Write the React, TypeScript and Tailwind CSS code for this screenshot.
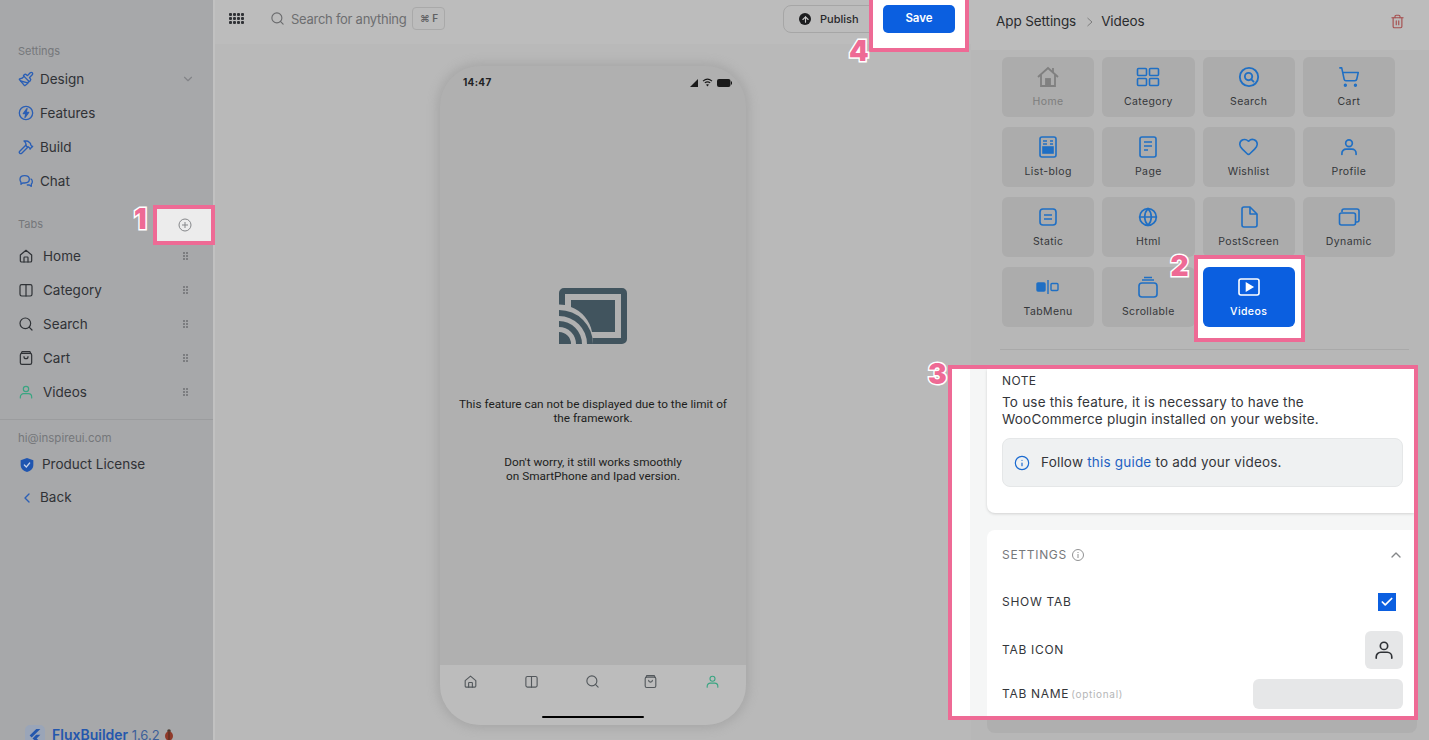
import React from "react";
import { ChevronDown, ChevronUp, ChevronLeft, Hammer, Search, Paintbrush, ShoppingCart, Heart, Globe, Trash2, Info, Check, ArrowUp } from "lucide-react";

const Svg = ({ s = 16, c = "currentColor", w = 1.6, children }: { s?: number; c?: string; w?: number; children: React.ReactNode }) => (
  <svg width={s} height={s} viewBox="0 0 24 24" fill="none" stroke={c} strokeWidth={w} strokeLinecap="round" strokeLinejoin="round" className="shrink-0">{children}</svg>
);

const HomeO = ({ s = 16, c = "#2f3236" }: { s?: number; c?: string }) => (
  <Svg s={s} c={c} w={1.8}><path d="M3.5 10.5 12 3.5l8.5 7V19a2 2 0 0 1-2 2h-13a2 2 0 0 1-2-2z" /><path d="M9 21v-6.5a1 1 0 0 1 1-1h4a1 1 0 0 1 1 1V21" /></Svg>
);
const Book = ({ s = 16, c = "#2f3236" }: { s?: number; c?: string }) => (
  <Svg s={s} c={c} w={1.8}><rect x="3" y="4" width="18" height="17" rx="2.5" /><path d="M12 4v17" /></Svg>
);
const Bag = ({ s = 16, c = "#2f3236" }: { s?: number; c?: string }) => (
  <Svg s={s} c={c} w={1.8}><rect x="3.5" y="5" width="17" height="16.5" rx="2.5" /><path d="M5 5l1-2.5h12L19 5" /><path d="M9 10c0 4 6 4 6 0" /></Svg>
);
const Person = ({ s = 16, c = "#2f3236", w = 1.8 }: { s?: number; c?: string; w?: number }) => (
  <Svg s={s} c={c} w={w}><circle cx="12" cy="7.5" r="4" /><path d="M3.5 21v-1.5a5 5 0 0 1 5-5h7a5 5 0 0 1 5 5V21" /></Svg>
);
const Bolt = () => (
  <Svg s={16} c="#2b5fb5" w={2}><circle cx="12" cy="12" r="10" /><path d="M13.5 5.5 8 13h4l-1.5 5.5L16 11h-4z" fill="#2b5fb5" /></Svg>
);
const Chat = () => (
  <Svg s={16} c="#2b5fb5" w={2}><path d="M3 9.5C3 6 6 4 10 4s7 2 7 5.5-3 5.5-7 5.5H7l-2.5 2V14C3.5 13 3 11.5 3 9.5z" /><path d="M19.5 9c1.5 1 2 2.5 2 4 0 1.5-.5 2.5-1.5 3.5V20l-3-2h-3" /></Svg>
);
const Shield = () => (
  <svg width="16" height="16" viewBox="0 0 24 24" className="shrink-0"><path d="M12 1.5 21.5 5v7c0 5.5-4 9-9.5 10.5C6.5 21 2.5 17.5 2.5 12V5z" fill="#1f55b0" /><path d="m8 12 3 3 5-6" fill="none" stroke="#c8d4ea" strokeWidth="1.8" strokeLinecap="round" /></svg>
);

const Dots = () => (
  <div className="grid grid-cols-2 gap-x-[1px] gap-y-[1px]">
    {[0, 1, 2, 3, 4, 5].map((i) => <span key={i} className="w-[2px] h-[2px] bg-[#7c7d80]" />)}
  </div>
);

const Num = ({ n, className }: { n: string; className: string }) => (
  <span className={`absolute text-[28px] font-black text-[#ee6a95] leading-none [-webkit-text-stroke:3px_white] [paint-order:stroke_fill] ${className}`}>{n}</span>
);

const NavRow = ({ icon, label, right }: { icon: React.ReactNode; label: string; right?: React.ReactNode }) => (
  <div className="h-[34px] shrink-0 flex items-center pl-[18px] pr-[18px] text-[#303236]">
    <span className="w-[22px] flex shrink-0">{icon}</span>
    <span className="flex-1">{label}</span>
    {right}
  </div>
);
const TabRow = ({ icon, label }: { icon: React.ReactNode; label: string }) => (
  <div className="h-[34px] shrink-0 flex items-center pl-[18px] pr-[25px] text-[#303236]">
    <span className="w-[25px] flex shrink-0">{icon}</span>
    <span className="flex-1">{label}</span>
    <Dots />
  </div>
);

const B = "#1f6fc4";
const tiles: { label: string; icon: React.ReactNode; dim?: boolean }[] = [
  { label: "Home", dim: true, icon: <svg width="24" height="24" viewBox="0 0 24 24" fill="none" stroke="#808080" strokeWidth="1.8"><path d="M2 12 12 3l10 9" /><path d="M5 10v11h14V10" /><rect x="10" y="14" width="4" height="7" fill="#808080" /><path d="M17 3v4" /></svg> },
  { label: "Category", icon: <svg width="24" height="20" viewBox="0 0 24 20" fill="none" stroke={B} strokeWidth="1.6"><rect x="1.5" y="1.5" width="9" height="7" rx="1" /><rect x="13.5" y="1.5" width="9" height="7" rx="1" /><rect x="1.5" y="11.5" width="9" height="7" rx="1" /><rect x="13.5" y="11.5" width="9" height="7" rx="1" /></svg> },
  { label: "Search", icon: <Svg s={22} c={B} w={2}><circle cx="12" cy="12" r="10" /><circle cx="11.5" cy="11.5" r="4" /><path d="m14.5 14.5 2.5 2.5" /></Svg> },
  { label: "Cart", icon: <ShoppingCart size={22} color={B} strokeWidth={1.7} /> },
  { label: "List-blog", icon: <svg width="18" height="22" viewBox="0 0 18 22" fill="none" stroke={B} strokeWidth="1.6"><rect x="1" y="1" width="16" height="20" rx="2" /><path d="M4 5h4M4 8h4M11 5h3M11 8h3" /><rect x="4" y="11" width="10" height="6" fill={B} /></svg> },
  { label: "Page", icon: <svg width="18" height="22" viewBox="0 0 18 22" fill="none" stroke={B} strokeWidth="1.6"><rect x="1" y="1" width="16" height="20" rx="2" /><path d="M5 6h8M5 10h8M5 14h4" /></svg> },
  { label: "Wishlist", icon: <Heart size={21} color={B} strokeWidth={1.8} /> },
  { label: "Profile", icon: <Person s={20} c={B} w={2} /> },
  { label: "Static", icon: <svg width="20" height="20" viewBox="0 0 20 20" fill="none" stroke={B} strokeWidth="1.6"><rect x="2" y="2" width="16" height="16" rx="3" /><path d="M6 8h8M6 12h8" /></svg> },
  { label: "Html", icon: <Globe size={20} color={B} strokeWidth={2} /> },
  { label: "PostScreen", icon: <svg width="18" height="22" viewBox="0 0 18 22" fill="none" stroke={B} strokeWidth="1.6" strokeLinejoin="round"><path d="M2 3a2 2 0 0 1 2-2h6l7 7v11a2 2 0 0 1-2 2H4a2 2 0 0 1-2-2z" /><path d="M10 1v7h7" /></svg> },
  { label: "Dynamic", icon: <svg width="22" height="20" viewBox="0 0 22 20" fill="none" stroke={B} strokeWidth="1.6" strokeLinejoin="round"><path d="M4 5V4a2 2 0 0 1 2-2h13a2 2 0 0 1 2 2v9a2 2 0 0 1-2 2h-1" /><rect x="1.5" y="6" width="16" height="12" rx="2" /></svg> },
  { label: "TabMenu", icon: <svg width="24" height="16" viewBox="0 0 24 16" fill="none" stroke={B} strokeWidth="1.4"><rect x="1" y="4" width="8" height="8" rx="1" fill={B} /><path d="M12 1v14" /><rect x="15" y="4.5" width="7" height="7" rx="1" /></svg> },
  { label: "Scrollable", icon: <svg width="20" height="22" viewBox="0 0 20 22" fill="none" stroke={B} strokeWidth="1.6"><rect x="1" y="7" width="18" height="14" rx="3" /><path d="M4 4h12M6 1.5h8" /></svg> },
];

const Tile = ({ label, icon, dim }: { label: string; icon: React.ReactNode; dim?: boolean }) => (
  <div className="h-[60px] rounded-[6px] bg-[#acacac] flex flex-col items-center">
    <div className="h-[37px] flex items-center justify-center pt-[2px]">{icon}</div>
    <div className={`text-[10.5px] tracking-[0.4px] ${dim ? "text-[#7d7d7d]" : "text-[#35373a]"}`}>{label}</div>
  </div>
);

export default function App() {
  return (
    <div className="w-[1429px] h-[740px] overflow-hidden flex text-[13.5px] bg-[#b9b9b9]" style={{ fontFamily: "Inter, 'Noto Sans', sans-serif" }}>
      {/* Sidebar */}
      <aside className="w-[213px] shrink-0 h-full bg-[#a7a8aa] flex flex-col">
        <div className="pt-[44px] pl-[18px] h-[62px] shrink-0 text-[11px] leading-[14px] text-[#75777a]">Settings</div>
        <NavRow icon={<Paintbrush size={16} color="#2b5fb5" strokeWidth={2} />} label="Design" right={<ChevronDown size={14} color="#838488" />} />
        <NavRow icon={<Bolt />} label="Features" />
        <NavRow icon={<Hammer size={16} color="#2b5fb5" strokeWidth={2} />} label="Build" />
        <NavRow icon={<Chat />} label="Chat" />
        <div className="h-[41px] shrink-0 flex items-start justify-between pl-[18px] pt-[7px]">
          <span className="h-[38px] flex items-center text-[11px] text-[#75777a]">Tabs</span>
          <div className="relative w-[62px] h-[40px] mr-[-2px] pl-[2px] border-[4px] border-[#ee6a95] bg-[#ececec] flex items-center justify-center z-10">
            <Num n="1" className="-left-[23px] -top-[4px]" />
            <svg width="14" height="14" viewBox="0 0 14 14" fill="none" stroke="#85878a" strokeWidth="1"><circle cx="7" cy="7" r="6" /><path d="M7 4v6M4 7h6" /></svg>
          </div>
        </div>
        <TabRow icon={<HomeO />} label="Home" />
        <TabRow icon={<Book />} label="Category" />
        <TabRow icon={<Search size={16} color="#2f3236" strokeWidth={1.8} />} label="Search" />
        <TabRow icon={<Bag />} label="Cart" />
        <TabRow icon={<Person c="#3aa582" />} label="Videos" />
        <div className="h-[11px] shrink-0 border-b border-[#9b9c9e]" />
        <div className="pl-[18px] pt-[11px] h-[28px] shrink-0 text-[11.5px] leading-[15px] text-[#75777a]">hi@inspireui.com</div>
        <div className="h-[33px] shrink-0 flex items-center pl-[19px] text-[#303236]"><span className="w-[23px] flex"><Shield /></span>Product License</div>
        <div className="h-[33px] shrink-0 flex items-center pl-[19px] text-[#303236]"><span className="w-[21px] flex"><ChevronLeft size={16} color="#2b5fb5" strokeWidth={2} /></span>Back</div>
        <div className="mt-[211px] pl-[25px] flex items-center gap-[7px] h-[20px] shrink-0">
          <span className="w-[20px] h-[20px] rounded-[5px] bg-[#9aa5b8] flex items-center justify-center shrink-0">
            <svg width="14" height="15" viewBox="0 0 17 18"><path d="M10 1 2 9l2.5 2.5L15 1zM10 8l-4.5 4.5L10 17h5l-4.5-4.5L15 8z" fill="#2457ad" /></svg>
          </span>
          <span className="font-semibold text-[14px] text-[#2457ad] whitespace-nowrap">FluxBuilder <span className="font-normal text-[13px] text-[#3d5f99]">1.6.2</span></span>
          <svg width="10" height="12" viewBox="0 0 10 12" className="shrink-0 -ml-[3px]"><circle cx="5" cy="2" r="1.8" fill="#4a3a30" /><ellipse cx="5" cy="7" rx="4" ry="4.5" fill="#8f3a2a" /><path d="M5 3v8" stroke="#4a2a20" /></svg>
        </div>
      </aside>
      <div className="w-[2px] shrink-0 bg-[#c1c1c1]" />

      {/* Centre */}
      <main className="w-[756px] shrink-0 h-full flex flex-col">
        <header className="h-[44px] shrink-0 flex items-start bg-[#bcbcbc]">
          <div className="ml-[14px] mt-[13px] w-[15px] grid grid-cols-4 gap-[1.5px]">
            {Array.from({ length: 12 }).map((_, i) => <span key={i} className="h-[2.5px] bg-[#303236] rounded-[1px]" />)}
          </div>
          <Search size={15} color="#6a6b6d" strokeWidth={1.8} className="ml-[26px] mt-[11px]" />
          <span className="ml-[6px] mt-[10px] text-[13px] leading-[19px] text-[#6d6e70] tracking-[-0.27px] whitespace-nowrap">Search for anything</span>
          <span className="ml-[6px] mt-[7px] w-[33px] h-[23px] rounded-[4px] border border-[#a9a9a9] flex items-center justify-center gap-[4px] text-[10px] font-semibold text-[#606163]">⌘ F</span>
          <div className="ml-auto flex items-start">
            <div className="mt-[5px] w-[100px] h-[28px] rounded-[8px] border border-[#a6a6a6] flex items-center pl-[15px] -mr-[14px] text-[11px] font-medium text-[#28292b]">
              <span className="w-[12px] h-[12px] rounded-full bg-[#1c1d1f] flex items-center justify-center mr-[9px]"><ArrowUp size={9} color="#c9c9c9" strokeWidth={3} /></span>Publish
            </div>
            <div className="relative z-10 w-[100px] h-[52px] border-[4px] border-t-0 border-[#ee6a95] bg-white pl-[10px] pt-[5px]">
              <Num n="4" className="-left-[24px] top-[37px]" />
              <div className="w-[72px] h-[28px] rounded-[5px] bg-[#0b5fe0] text-white text-[11.5px] font-semibold flex items-center justify-center">Save</div>
            </div>
            <span className="w-[2px]" />
          </div>
        </header>
        <div className="flex-1 flex flex-col items-center">
          <div className="mt-[22px] w-[306px] h-[659px] shrink-0 rounded-[40px] bg-[#b0b0b0] shadow-[0_0_8px_4px_rgba(150,150,150,0.45)] flex flex-col overflow-hidden">
            <div className="h-[22px] flex items-end justify-between pl-[23px] pr-[14px] shrink-0">
              <span className="text-[10px] font-bold tracking-[0.3px] text-[#212224] leading-[12px]">14:47</span>
              <div className="flex items-center gap-[4px] pb-[1px]">
                <svg width="8" height="8" viewBox="0 0 8 8"><path d="M8 0v8H0z" fill="#1a1a1a" /></svg>
                <svg width="11" height="9" viewBox="0 0 12 10" fill="none" stroke="#1a1a1a" strokeWidth="1.2"><path d="M1 3.5C4 .8 8 .8 11 3.5M3 5.5c1.8-1.5 4.2-1.5 6 0" /><path d="M6 9.5 4.5 7.5c1-.7 2-.7 3 0z" fill="#1a1a1a" stroke="none" /></svg>
                <svg width="15" height="8" viewBox="0 0 15 8"><rect width="13.5" height="8" rx="2" fill="#1a1a1a" /><rect x="14" y="2.5" width="1" height="3" fill="#1a1a1a" /></svg>
              </div>
            </div>
            <div className="flex-1 flex flex-col items-center text-[11.8px] leading-[14px] text-[#1d1e20] text-center" style={{ fontFamily: "Roboto, sans-serif" }}>
              <svg width="68" height="56" viewBox="0 0 68 56" className="mt-[200px] shrink-0">
                <path d="M5 0h58a5 5 0 0 1 5 5v46a5 5 0 0 1-5 5H34a34 34 0 0 0-.5-6H62V6H6v11a34 34 0 0 0-6-.5V5a5 5 0 0 1 5-5z" fill="#41545e" />
                <path d="M12 12h44v32H33a33 33 0 0 0-21-25z" fill="#41545e" />
                <path d="M0 22a34 34 0 0 1 34 34h-6A28 28 0 0 0 0 28z M0 33a23 23 0 0 1 23 23h-6A17 17 0 0 0 0 39z M0 44a12 12 0 0 1 12 12H0z" fill="#41545e" />
              </svg>
              <p className="mt-[53px] w-[280px]">This feature can not be displayed due to the limit of the framework.</p>
              <p className="mt-[30px] w-[220px]">Don't worry, it still works smoothly<br />on SmartPhone and Ipad version.</p>
            </div>
            <div className="h-[60px] shrink-0 bg-[#bcbcbc] relative">
              <div className="flex items-start pt-[9px] h-full">
                <span className="w-[62px] flex justify-center"><HomeO s={15} c="#53585c" /></span>
                <span className="w-[61px] flex justify-center"><Book s={15} c="#53585c" /></span>
                <span className="w-[61px] flex justify-center"><Search size={15} color="#53585c" strokeWidth={1.8} /></span>
                <span className="w-[57px] flex justify-center"><Bag s={15} c="#53585c" /></span>
                <span className="w-[68px] flex justify-center"><Person s={15} c="#3aa582" /></span>
              </div>
              <div className="absolute left-[102px] bottom-[7px] w-[102px] h-[2.5px] rounded-full bg-black" />
            </div>
          </div>
        </div>
      </main>

      {/* Right panel */}
      <section className="flex-1 min-w-0 h-full flex flex-col bg-[#b7b7b7]">
        <header className="h-[50px] shrink-0 bg-[#bcbcbc] flex items-center pl-[25px] pr-[24px] pb-[7px] text-[13.5px] text-[#2a2b2d] tracking-[-0.1px]">
          <span>App Settings</span>
          <span className="ml-[10px] mr-[7px]"><svg width="8" height="10" viewBox="0 0 8 10" fill="none" stroke="#7d7d7d"><path d="m1.5 1 4.5 4-4.5 4" /></svg></span>
          <span>Videos</span>
          <Trash2 size={15} color="#a54d4d" strokeWidth={1.8} className="ml-auto" />
        </header>
        <div className="flex-1 min-h-0 flex flex-col">
          <div className="pt-[7px] ml-[31px] w-[393px] grid grid-cols-4 gap-x-[8px] gap-y-[10px] shrink-0">
            {tiles.map((t) => <Tile key={t.label} {...t} />)}
            <div className="relative h-[60px]">
              <div className="absolute -left-[9px] -right-[10px] -top-[12px] -bottom-[15px] border-[4px] border-[#ee6a95] bg-white" />
              <Num n="2" className="-left-[32px] -top-[15px]" />
              <div className="relative h-[60px] rounded-[6px] bg-[#0b5fe0] flex flex-col items-center text-white">
                <div className="h-[37px] flex items-center justify-center pt-[2px]">
                  <svg width="22" height="18" viewBox="0 0 22 18" fill="none" stroke="#fff" strokeWidth="1.6"><rect x="1" y="1" width="20" height="16" rx="2" /><path d="M8.5 5.5v7l6-3.5z" fill="#fff" /></svg>
                </div>
                <div className="text-[10.5px] tracking-[0.4px] font-medium">Videos</div>
              </div>
            </div>
          </div>
          <div className="mt-[22px] ml-[29px] mr-[20px] border-t border-[#a9a9a9] shrink-0" />
          {/* Highlight 3 */}
          <div className="relative mt-[15px] -ml-[23px] w-[470px] h-[355px] shrink-0 border-[4px] border-[#ee6a95] bg-white flex">
            <Num n="3" className="-left-[24px] -top-[9px]" />
            <div className="w-[18px] shrink-0 bg-white" />
            <div className="flex-1 min-w-0 bg-[#f5f6f6] pl-[17px] flex flex-col overflow-hidden">
              <div className="h-[144px] shrink-0 bg-white rounded-bl-[8px] shadow-[0_1px_3px_rgba(0,0,0,0.15)] pl-[15px] pr-[11px] pt-[4px] text-[13.5px] text-[#34363a]">
                <div className="text-[12px] leading-[16px] tracking-[0.4px]">NOTE</div>
                <p className="mt-[5px] leading-[17px] tracking-[0.2px] whitespace-nowrap">To use this feature, it is necessary to have the<br />WooCommerce plugin installed on your website.</p>
                <div className="mt-[10px] h-[49px] rounded-[8px] bg-[#eff1f2] border border-[#e5e7e8] flex items-center pl-[11px]">
                  <Info size={16} color="#1a6ad0" strokeWidth={1.8} />
                  <span className="ml-[11px] tracking-[0.2px]">Follow <span className="text-[#1f62c2]">this guide</span> to add your videos.</span>
                </div>
              </div>
              <div className="mt-[17px] flex-1 bg-white rounded-tl-[8px] pl-[15px] pr-[11px] text-[12px] tracking-[0.7px] text-[#34363a]">
                <div className="h-[50px] flex items-center justify-between text-[#76787b]">
                  <span className="flex items-center gap-[5px]">SETTINGS <svg width="12" height="12" viewBox="0 0 12 12" fill="none" stroke="#909192"><circle cx="6" cy="6" r="5.5" /><path d="M6 5v4M6 3v1" /></svg></span>
                  <ChevronUp size={16} color="#858789" className="mr-[-1px]" />
                </div>
                <div className="h-[44px] flex items-center justify-between">
                  <span>SHOW TAB</span>
                  <span className="w-[18px] h-[18px] bg-[#0b5fe0] flex items-center justify-center mr-[7px]"><Check size={14} color="#fff" strokeWidth={3} /></span>
                </div>
                <div className="h-[52px] flex items-center justify-between">
                  <span>TAB ICON</span>
                  <span className="w-[38px] h-[38px] rounded-[6px] bg-[#e6e7e8] flex items-center justify-center"><Person s={22} c="#2f3236" /></span>
                </div>
                <div className="h-[36px] flex items-center justify-between">
                  <span>TAB NAME<span className="ml-[2px] text-[10px] text-[#b5b6b7]">(optional)</span></span>
                  <span className="w-[150px] h-[30px] rounded-[6px] bg-[#e6e7e8]" />
                </div>
              </div>
            </div>
          </div>
          <div className="ml-[16px] mr-[12px] h-[13px] shrink-0 bg-[#afafaf] rounded-b-[8px]" />
        </div>
      </section>
    </div>
  );
}
